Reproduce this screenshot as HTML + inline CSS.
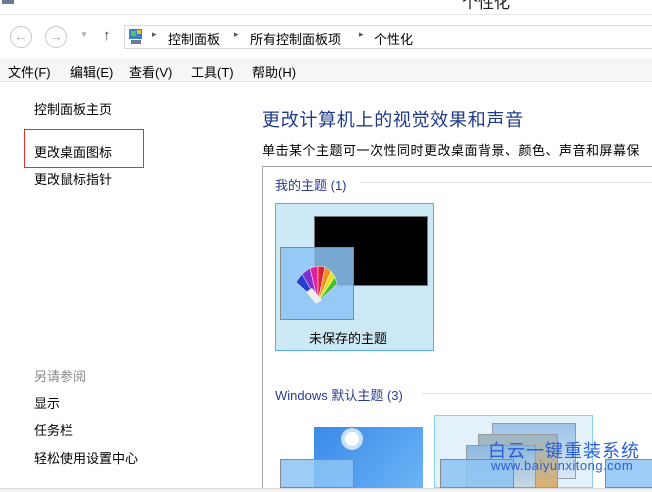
<!DOCTYPE html>
<html><head><meta charset="utf-8"><style>
*{margin:0;padding:0;box-sizing:border-box}
body{width:652px;height:492px;overflow:hidden;background:#fff;position:relative;font-family:"Liberation Sans","Noto Sans CJK SC",sans-serif;font-size:13px;color:#000}
#w{position:absolute;left:0;top:0;width:652px;height:492px;overflow:hidden}
.a{position:absolute;white-space:nowrap}
.c{border-radius:50%;border:1px solid #c8c8c8;width:22px;height:22px;color:#b0b0b0;font-size:14px;text-align:center;line-height:19px}
</style></head><body><div id="w">
<div class="a" style="left:0;top:0;width:652px;height:15px;background:#fff;border-bottom:1px solid #e6e6e6"></div>
<div class="a" style="left:462px;top:-11px;font-size:16px;color:#222">个性化</div>
<div class="a" style="left:2px;top:-4px;width:12px;height:8px;background:#6a7a99"></div>
<div class="a c" style="left:10px;top:26px">&#8592;</div>
<div class="a c" style="left:45px;top:26px">&#8594;</div>
<div class="a" style="left:80px;top:30px;font-size:8px;color:#aaa">▼</div>
<div class="a" style="left:103px;top:27px;font-size:15px;color:#444">↑</div>
<div class="a" style="left:124px;top:25px;width:528px;height:24px;border:1px solid #d9d9d9;border-right:none"></div>
<svg class="a" style="left:128px;top:28px" width="16" height="18"><rect x="1" y="1" width="13" height="10" fill="#3b7fc9"/><rect x="3" y="3" width="5" height="5" fill="#5ac05a"/><rect x="9" y="2" width="4" height="4" fill="#e8c030"/><rect x="3" y="12" width="10" height="4" fill="#6a7a99"/></svg>
<div class="a" style="left:152px;top:29px;color:#555;font-size:9px">▸</div>
<div class="a" style="left:168px;top:29px">控制面板</div>
<div class="a" style="left:234px;top:29px;color:#555;font-size:9px">▸</div>
<div class="a" style="left:250px;top:29px">所有控制面板项</div>
<div class="a" style="left:359px;top:29px;color:#555;font-size:9px">▸</div>
<div class="a" style="left:374px;top:29px">个性化</div>
<div class="a" style="left:0;top:58px;width:652px;height:24px;background:#f5f6f7;border-bottom:1px solid #e5e5e5"></div>
<div class="a" style="left:8px;top:62px">文件(F)</div>
<div class="a" style="left:70px;top:62px">编辑(E)</div>
<div class="a" style="left:129px;top:62px">查看(V)</div>
<div class="a" style="left:191px;top:62px">工具(T)</div>
<div class="a" style="left:252px;top:62px">帮助(H)</div>
<div class="a" style="left:34px;top:99px">控制面板主页</div>
<div class="a" style="left:24px;top:129px;width:120px;height:39px;border:1px solid #e03030"></div>
<div class="a" style="left:34px;top:142px">更改桌面图标</div>
<div class="a" style="left:34px;top:169px">更改鼠标指针</div>
<div class="a" style="left:34px;top:366px;color:#888">另请参阅</div>
<div class="a" style="left:34px;top:393px">显示</div>
<div class="a" style="left:34px;top:420px">任务栏</div>
<div class="a" style="left:34px;top:448px">轻松使用设置中心</div>
<div class="a" style="left:262px;top:106px;font-size:18px;color:#1e3a8a;letter-spacing:.7px">更改计算机上的视觉效果和声音</div>
<div class="a" style="left:262px;top:140px;width:390px;overflow:hidden;letter-spacing:.5px">单击某个主题可一次性同时更改桌面背景、颜色、声音和屏幕保</div>
<div class="a" style="left:262px;top:166px;width:390px;height:326px;border-left:1px solid #a0a0a0;border-top:1px solid #a0a0a0"></div>
<div class="a" style="left:275px;top:175px;color:#2b3b8f">我的主题 (1)</div>
<div class="a" style="left:360px;top:182px;width:292px;height:1px;background:#e2e2e2"></div>
<div class="a" style="left:275px;top:203px;width:159px;height:148px;background:#cce8f5;border:1px solid #5aaee0"></div>
<div class="a" style="left:314px;top:216px;width:114px;height:70px;background:#000;border:1px solid #777"></div>
<div class="a" style="left:280px;top:247px;width:74px;height:73px;background:rgba(140,195,245,.85);border:1px solid #888"></div>
<svg class="a" style="left:292px;top:262px" width="50" height="46"><g stroke="#fff" stroke-width=".5"><path d="M26 40 L4 20 L10 12Z" fill="#2040d0"/><path d="M26 40 L10 12 L18 6Z" fill="#8030d0"/><path d="M26 40 L18 6 L26 4Z" fill="#e020a0"/><path d="M26 40 L26 4 L33 5Z" fill="#e02030"/><path d="M26 40 L33 5 L39 9Z" fill="#f09020"/><path d="M26 40 L39 9 L43 15Z" fill="#e8e020"/><path d="M26 40 L43 15 L45 22Z" fill="#40c030"/></g><path d="M14 30 L24 42 L30 38 L20 26Z" fill="#eee"/></svg>
<div class="a" style="left:309px;top:328px">未保存的主题</div>
<div class="a" style="left:275px;top:385px;color:#2b3b8f">Windows 默认主题 (3)</div>
<div class="a" style="left:422px;top:393px;width:230px;height:1px;background:#e2e2e2"></div>
<div class="a" style="left:314px;top:427px;width:109px;height:61px;background:linear-gradient(135deg,#3a8ae8,#6cb4f5)"></div>
<div class="a" style="left:345px;top:432px;width:14px;height:14px;border-radius:50%;background:#fff;box-shadow:0 0 0 4px rgba(255,255,255,.7)"></div>
<div class="a" style="left:280px;top:459px;width:74px;height:29px;background:rgba(140,195,245,.85);border:1px solid #888"></div>
<div class="a" style="left:434px;top:415px;width:159px;height:73px;background:#e2f1fa;border:1px solid #8cd0f0"></div>
<div class="a" style="left:492px;top:423px;width:84px;height:56px;background:linear-gradient(#9cc4e8,#d8e8f5);border:1px solid #999"></div>
<div class="a" style="left:478px;top:434px;width:80px;height:54px;background:linear-gradient(#9ab8cc,#dcb070);border:1px solid #999"></div>
<div class="a" style="left:466px;top:445px;width:70px;height:43px;background:linear-gradient(#8cb8e0,#c8d8e0);border:1px solid #999"></div>
<div class="a" style="left:440px;top:459px;width:74px;height:29px;background:rgba(140,195,245,.85);border:1px solid #888"></div>
<div class="a" style="left:605px;top:459px;width:47px;height:29px;background:rgba(140,195,245,.85);border:1px solid #888;border-right:none"></div>
<div class="a" style="left:488px;top:437px;font-size:18px;color:#2a5fd8;letter-spacing:1px">白云一键重装系统</div>
<div class="a" style="left:491px;top:458px;font-size:13px;color:#2a5fd8;letter-spacing:.5px">www.baiyunxitong.com</div>
<div class="a" style="left:0;top:488px;width:652px;height:4px;background:#f0f0f0;border-top:1px solid #ddd"></div>
</div></body></html>
